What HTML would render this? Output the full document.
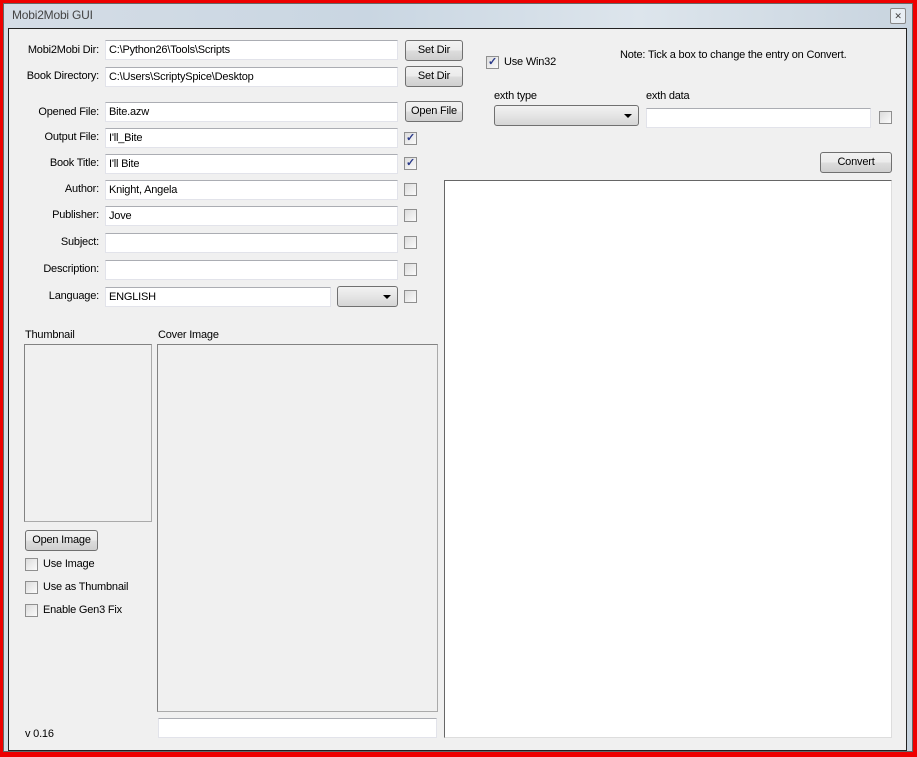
<!DOCTYPE html>
<html><head><meta charset="utf-8"><style>
*{box-sizing:border-box;margin:0;padding:0}
body{width:917px;height:757px;background:#e00;position:relative;overflow:hidden;font-family:"Liberation Sans",sans-serif;font-size:11px;letter-spacing:-0.2px;color:#000}
.frame{position:absolute;left:3px;top:3px;width:910px;height:749px;background:linear-gradient(90deg,#d5dde6,#c9d6e2 40%,#dde5ec 70%,#c8d4df);border:1px solid #666}
.title{position:absolute;left:12px;top:8px;font-size:12px;color:#444}
.close{position:absolute;left:890px;top:8px;width:16px;height:16px;border:1px solid #888;border-radius:2px;background:#e8eef4;font-size:9px;text-align:center;line-height:14px;color:#444}
.client{position:absolute;left:8px;top:28px;width:899px;height:723px;background:#f0f0f0;border:1px solid #222}
.a{position:absolute;white-space:nowrap}
.lbl{position:absolute;white-space:nowrap;text-align:right;width:90px;left:9px}
.tb{position:absolute;background:#fff;border:1px solid #e2e3ea;border-top-color:#abadb3;height:20px;padding-left:3px;line-height:18px}
.btn{position:absolute;border:1px solid #707070;border-radius:3px;background:linear-gradient(#f2f2f2,#ebebeb 50%,#dddddd 51%,#cfcfcf);text-align:center;line-height:19px;height:21px}
.cb{position:absolute;width:13px;height:13px;border:1px solid #8f8f8f;background:linear-gradient(135deg,#dcdcdc,#fbfbfb);font-size:11px;line-height:11px;text-align:center;color:#2a3a8a;font-weight:bold}
.cmb{position:absolute;border:1px solid #707070;border-radius:3px;background:linear-gradient(#f2f2f2,#e5e5e5 50%,#d5d5d5);height:21px}
.cmb:after{content:"";position:absolute;right:6px;top:8px;border-left:4px solid transparent;border-right:4px solid transparent;border-top:4px solid #000}
.box{position:absolute;border:1px solid #828282;border-right-color:#aaa;border-bottom-color:#aaa}
</style></head><body>
<div class="frame"></div>
<div class="title">Mobi2Mobi GUI</div>
<div class="close">✕</div>
<div class="client"></div>

<div class="lbl" style="top:44px">Mobi2Mobi Dir:</div>
<div class="tb" style="left:105px;top:40px;width:293px">C:\Python26\Tools\Scripts</div>
<div class="btn" style="left:405px;top:40px;width:58px">Set Dir</div>
<div class="lbl" style="top:70px">Book Directory:</div>
<div class="tb" style="left:105px;top:67px;width:293px">C:\Users\ScriptySpice\Desktop</div>
<div class="btn" style="left:405px;top:66px;width:58px">Set Dir</div>

<div class="lbl" style="top:106px">Opened File:</div>
<div class="tb" style="left:105px;top:102px;width:293px">Bite.azw</div>
<div class="btn" style="left:405px;top:101px;width:58px">Open File</div>

<div class="lbl" style="top:131px">Output File:</div>
<div class="tb" style="left:105px;top:128px;width:293px">I'll_Bite</div>
<div class="cb" style="left:404px;top:132px">✓</div>
<div class="lbl" style="top:157px">Book Title:</div>
<div class="tb" style="left:105px;top:154px;width:293px">I'll Bite</div>
<div class="cb" style="left:404px;top:157px">✓</div>
<div class="lbl" style="top:183px">Author:</div>
<div class="tb" style="left:105px;top:180px;width:293px">Knight, Angela</div>
<div class="cb" style="left:404px;top:183px"></div>
<div class="lbl" style="top:209px">Publisher:</div>
<div class="tb" style="left:105px;top:206px;width:293px">Jove</div>
<div class="cb" style="left:404px;top:209px"></div>
<div class="lbl" style="top:236px">Subject:</div>
<div class="tb" style="left:105px;top:233px;width:293px"></div>
<div class="cb" style="left:404px;top:236px"></div>
<div class="lbl" style="top:263px">Description:</div>
<div class="tb" style="left:105px;top:260px;width:293px"></div>
<div class="cb" style="left:404px;top:263px"></div>
<div class="lbl" style="top:290px">Language:</div>
<div class="tb" style="left:105px;top:287px;width:226px">ENGLISH</div>
<div class="cmb" style="left:337px;top:286px;width:61px"></div>
<div class="cb" style="left:404px;top:290px"></div>

<div class="a" style="left:25px;top:329px">Thumbnail</div>
<div class="box" style="left:24px;top:344px;width:128px;height:178px"></div>
<div class="a" style="left:158px;top:329px">Cover Image</div>
<div class="box" style="left:157px;top:344px;width:281px;height:368px"></div>
<div class="tb" style="left:158px;top:718px;width:279px"></div>
<div class="btn" style="left:25px;top:530px;width:73px">Open Image</div>
<div class="cb" style="left:25px;top:558px"></div><div class="a" style="left:43px;top:558px">Use Image</div>
<div class="cb" style="left:25px;top:581px"></div><div class="a" style="left:43px;top:581px">Use as Thumbnail</div>
<div class="cb" style="left:25px;top:604px"></div><div class="a" style="left:43px;top:604px">Enable Gen3 Fix</div>
<div class="a" style="left:25px;top:728px">v 0.16</div>

<div class="cb" style="left:486px;top:56px">✓</div><div class="a" style="left:504px;top:56px">Use Win32</div>
<div class="a" style="left:620px;top:49px">Note: Tick a box to change the entry on Convert.</div>
<div class="a" style="left:494px;top:90px">exth type</div>
<div class="cmb" style="left:494px;top:105px;width:145px"></div>
<div class="a" style="left:646px;top:90px">exth data</div>
<div class="tb" style="left:646px;top:108px;width:225px"></div>
<div class="cb" style="left:879px;top:111px"></div>
<div class="btn" style="left:820px;top:152px;width:72px">Convert</div>
<div class="box" style="left:444px;top:180px;width:448px;height:558px;background:#fff;border-color:#666 #ddd #ddd #666"></div>
</body></html>
